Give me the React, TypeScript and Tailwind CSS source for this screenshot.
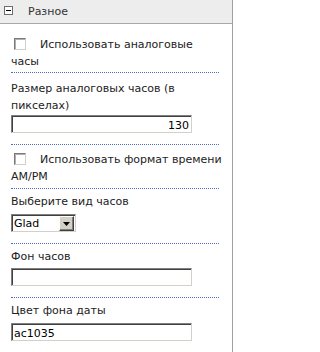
// Web part settings panel: "Разное" section with clock options
const sunken =
  'border border-t-[#808080] border-l-[#808080] border-r-[#d4d0c8] border-b-[#d4d0c8] shadow-[inset_1px_1px_0_#404040]';

function CheckBox() {
  return (
    <span
      className="inline-block w-[12px] h-[12px] ml-[3px] mr-[14px] align-[-2px] bg-white border border-t-[#7a7a7a] border-l-[#7a7a7a] border-r-[#d4d0c8] border-b-[#d4d0c8] shadow-[inset_1px_1px_0_#b0b0b0]"
    />
  );
}

function TextBox({ value = '', right = false }: { value?: string; right?: boolean }) {
  return (
    <input
      readOnly
      value={value}
      className={`block w-[181px] h-[18px] px-[2px] pt-[2px] bg-white text-[11px] text-black font-['DejaVu_Sans',sans-serif] outline-none ${sunken} ${
        right ? 'text-right' : 'text-left'
      }`}
    />
  );
}

function Select({ value }: { value: string }) {
  return (
    <div className={`flex w-[65px] h-[18px] bg-white ${sunken} p-[1px] pl-[2px]`}>
      <span className="flex-1 leading-[15px] text-black">{value}</span>
      <span className="flex items-center justify-center w-[15px] h-[15px] bg-[#d4d0c8] border border-t-[#ffffff] border-l-[#ffffff] border-r-[#404040] border-b-[#404040] shadow-[inset_-1px_-1px_0_#808080]">
        <svg width="7" height="4" viewBox="0 0 7 4">
          <path d="M0 0h7L3.5 4z" fill="#000" />
        </svg>
      </span>
    </div>
  );
}

export default function App() {
  return (
    <div className="w-[234px] h-[352px] overflow-hidden bg-white font-['DejaVu_Sans',sans-serif] text-[11px] leading-[17px] text-[#222]">
      <div className="w-[233px] h-full border-r border-[#a0a0a0]">
        {/* Section header */}
        <div className="flex items-start h-[24px] bg-[#ededed] border-b border-[#a8a8a8]">
          <span className="relative w-[9px] h-[9px] ml-[4px] mt-[6px] bg-white border border-[#6e6e6e]">
            <span className="absolute left-[1px] top-[3px] w-[5px] h-[1px] bg-black" />
          </span>
          <span className="ml-[15px] mt-[3px] text-[#333]">Разное</span>
        </div>

        <div className="mx-[11px] w-[208px] pt-[12px] pb-[2px] border-b border-dotted border-[#4a6ad6]">
          <CheckBox />
          Использовать аналоговые
          <br />
          часы
        </div>

        <div className="mx-[11px] w-[208px] pt-[7px] pb-[11px] border-b border-dotted border-[#4a6ad6]">
          <div>
            Размер аналоговых часов (в
            <br />
            пикселах)
          </div>
          <div className="mt-[1px]">
            <TextBox value="130" right />
          </div>
        </div>

        <div className="mx-[11px] w-[208px] pt-[6px] pb-[3px] border-b border-dotted border-[#4a6ad6] whitespace-nowrap">
          <CheckBox />
          Использовать формат времени
          <br />
          AM/PM
        </div>

        <div className="mx-[11px] w-[208px] pt-[4px] pb-[11px] border-b border-dotted border-[#4a6ad6]">
          <div>Выберите вид часов</div>
          <div className="mt-[4px]">
            <Select value="Glad" />
          </div>
        </div>

        <div className="mx-[11px] w-[208px] pt-[4px] pb-[11px] border-b border-dotted border-[#4a6ad6]">
          <div>Фон часов</div>
          <div className="mt-[3px]">
            <TextBox />
          </div>
        </div>

        <div className="mx-[11px] w-[208px] pt-[4px] pb-[11px]">
          <div>Цвет фона даты</div>
          <div className="mt-[4px]">
            <TextBox value="ac1035" />
          </div>
        </div>
      </div>
    </div>
  );
}
